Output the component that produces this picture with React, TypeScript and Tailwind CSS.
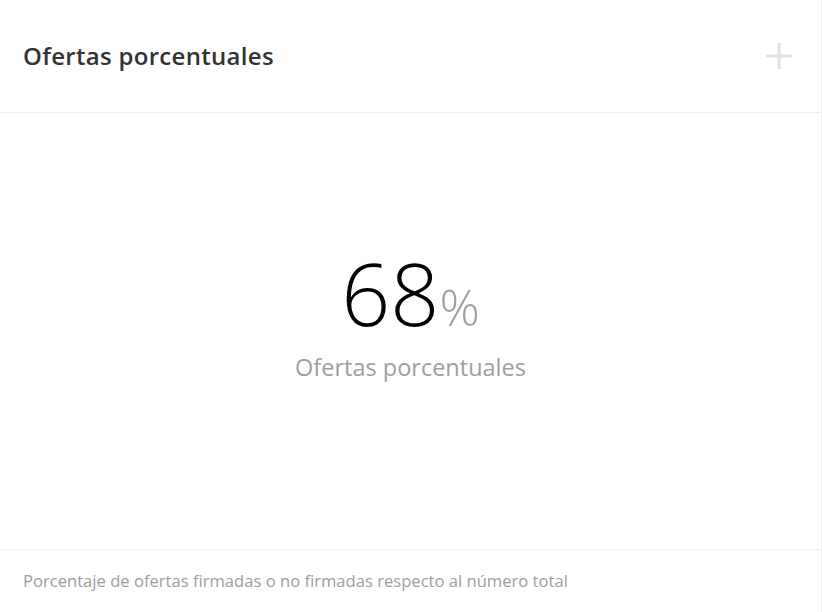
export default function App() {
  return (
    <div className="w-[822px] h-[612px] bg-white font-['Open_Sans',sans-serif] flex">
      <div className="flex-1 flex flex-col border-r border-[#eeeeee]">
        <header className="h-[113px] flex items-center justify-between pl-[23px] pr-[29px] border-b border-[#eeeeee] shrink-0">
          <h1 className="text-[24px] tracking-[0.3px] font-semibold text-[#333333]">Ofertas porcentuales</h1>
          <svg width="26" height="26" viewBox="0 0 26 26" className="text-[#e2e2e2]">
            <path d="M13 1v24M1 13h24" stroke="currentColor" strokeWidth="3" strokeLinecap="round" />
          </svg>
        </header>
        <section className="flex-1 flex flex-col items-center justify-center pb-[26px]">
          <div className="flex items-baseline leading-none">
            <span className="text-[86px] font-light text-black">68</span>
            <span className="text-[50px] font-light text-[#9e9e9e]">%</span>
          </div>
          <p className="mt-[14px] text-[23.5px] text-[#9e9e9e]">Ofertas porcentuales</p>
        </section>
        <footer className="h-[63px] border-t border-[#eeeeee] flex items-center pl-[23px] shrink-0">
          <p className="text-[16.6px] text-[#9e9e9e]">Porcentaje de ofertas firmadas o no firmadas respecto al número total</p>
        </footer>
      </div>
    </div>
  );
}
